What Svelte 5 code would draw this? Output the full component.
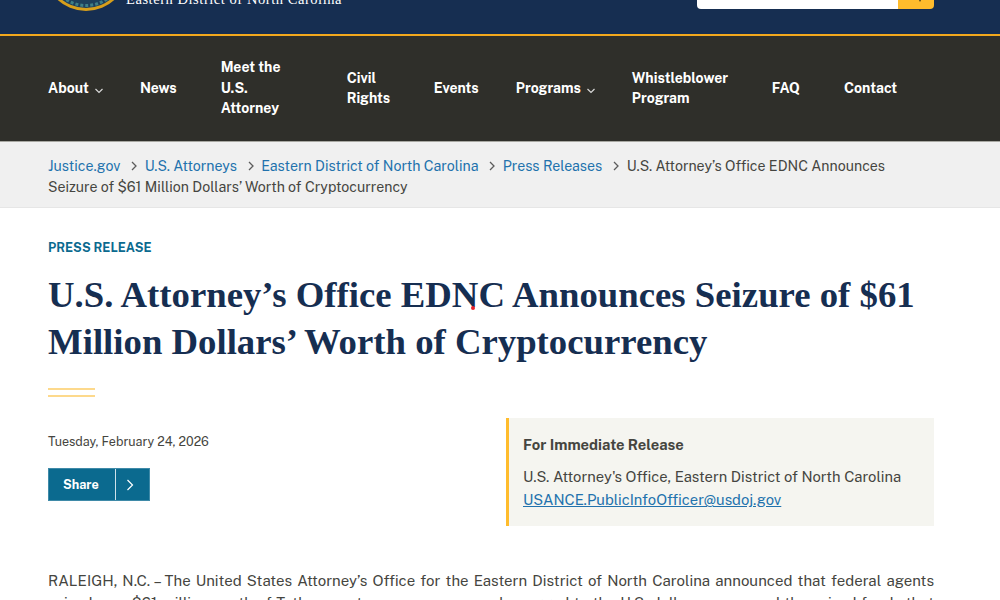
<script>
  const nav = [
    { label: "About", caret: true },
    { label: "News" },
    { label: "Meet the U.S. Attorney", size: "w82" },
    { label: "Civil Rights", size: "w43" },
    { label: "Events" },
    { label: "Programs", caret: true },
    { label: "Whistleblower Program", size: "w96" },
    { label: "FAQ" },
    { label: "Contact" }
  ];
  const crumbs = ["Justice.gov", "U.S. Attorneys", "Eastern District of North Carolina", "Press Releases"];
</script>

<header class="top">
  <div class="brand">
    <svg class="seal" width="84" height="84" viewBox="0 0 84 84">
      <circle cx="42" cy="42" r="42" fill="#d79f1b" />
      <circle cx="42" cy="42" r="39" fill="#1d3f5c" />
      <circle cx="42" cy="42" r="36.5" fill="none" stroke="#3f7f86" stroke-width="3" stroke-dasharray="3 2" />
      <circle cx="42" cy="42" r="31" fill="#8c8f4e" />
    </svg>
    <span class="district">Eastern District of North Carolina</span>
  </div>
  <div class="search">
    <div class="field"></div>
    <div class="go">
      <svg width="4" height="3" viewBox="0 0 4 3"><path d="M1 0h2l-1 2z" fill="#4a3b14" /></svg>
    </div>
  </div>
</header>

<nav class="mainnav">
  {#each nav as item}
    <a href="#top" class="navitem {item.size ?? ''}" class:has-caret={item.caret}>
      <span>{item.label}</span>
      {#if item.caret}
        <svg width="10" height="6" viewBox="0 0 10 6" fill="none" stroke="#d8d8d8" stroke-width="1.2"><path d="M1.5 1l3.5 3.5L8.5 1" /></svg>
      {/if}
    </a>
  {/each}
</nav>

<div class="crumbs">
  <p>
    {#each crumbs as c}
      <a href="#top">{c}</a>
      <svg class="sep" width="8" height="10" viewBox="0 0 8 10" fill="none" stroke="#5c5c5c" stroke-width="1.3"><path d="M2 1l4 4-4 4" /></svg>
    {/each}
    <span class="here">U.S. Attorney’s Office EDNC Announces Seizure of $61 Million Dollars’ Worth of Cryptocurrency</span>
  </p>
</div>

<main>
  <div class="kicker">PRESS RELEASE</div>
  <h1>U.S. Attorney’s Office EDNC Announces Seizure of $61 Million Dollars’ Worth of Cryptocurrency</h1>
  <div class="rule"></div>

  <div class="meta">
    <div class="left">
      <div class="date">Tuesday, February 24, 2026</div>
      <button class="share">
        <span class="share-label">Share</span>
        <span class="share-icon">
          <svg width="8" height="12" viewBox="0 0 8 12" fill="none" stroke="#fff" stroke-width="1.2"><path d="M1.5 1l5 5-5 5" /></svg>
        </span>
      </button>
    </div>
    <aside class="contact">
      <h2>For Immediate Release</h2>
      <div>U.S. Attorney's Office, Eastern District of North Carolina</div>
      <a href="#top">USANCE.PublicInfoOfficer@usdoj.gov</a>
    </aside>
  </div>

  <p class="body">RALEIGH, N.C. – The United States Attorney’s Office for the Eastern District of North Carolina announced that federal agents seized over $61 million worth of Tether cryptocurrency, commonly pegged to the U.S. dollar, a scam and the seized funds that were traced to victims across the country.</p>
</main>

<span class="dot"></span>

<style>
  :global(body) {
    margin: 0;
    background: #fff;
    font-family: "Public Sans", Inter, "Liberation Sans", sans-serif;
    overflow: hidden;
    height: 600px;
  }

  .top {
    height: 34px;
    background: #162e51;
    display: flex;
    justify-content: space-between;
    align-items: flex-start;
    padding: 0 66px 0 48px;
    overflow: hidden;
  }

  .brand {
    display: flex;
    align-items: flex-start;
    margin-left: -4.5px;
  }

  .seal {
    margin-top: -73px;
    flex: none;
  }

  .district {
    font-family: "Liberation Serif", serif;
    font-size: 14.5px;
    line-height: 16px;
    color: #fff;
    margin: -9px 0 0 -1.5px;
    letter-spacing: 0.55px;
    white-space: nowrap;
  }

  .search {
    display: flex;
    height: 9px;
    width: 237px;
    border-radius: 0 0 4px 4px;
    overflow: hidden;
  }

  .field {
    flex: 1;
    background: #fff;
  }

  .go {
    width: 36px;
    background: #ffbc2c;
    display: flex;
    justify-content: center;
    align-items: flex-start;
  }

  .go svg {
    display: block;
    margin-left: 8px;
  }

  .mainnav {
    height: 105px;
    background: #2f2f2a;
    border-top: 2px solid #f2a81d;
    display: flex;
    align-items: center;
    padding-left: 48px;
    gap: 44px;
    box-sizing: content-box;
  }

  .navitem {
    color: #fff;
    font-size: 14px;
    font-weight: 700;
    line-height: 20.5px;
    text-decoration: none;
    display: flex;
    align-items: center;
    gap: 5px;
    white-space: nowrap;
    flex: none;
    margin-top: -1px;
  }

  .navitem svg {
    margin-top: 6px;
  }

  .has-caret {
    margin-right: -8px;
  }

  .has-caret:not(:first-child) {
    margin-left: -7px;
  }

  .w82 {
    white-space: normal;
    width: 82px;
  }

  .w43 {
    white-space: normal;
    width: 43px;
  }

  .w96 {
    white-space: normal;
    width: 96px;
  }

  .crumbs {
    background: #f0f0f0;
    border-top: 1px solid #a8a8a2;
    border-bottom: 1px solid #e6e6e6;
    padding: 14px 48px 10px;
    height: 41px;
  }

  .crumbs p {
    margin: 0;
    width: 860px;
    font-size: 14.16px;
    line-height: 20.7px;
    color: #454540;
  }

  .crumbs a {
    color: #2272ad;
    text-decoration: none;
  }

  .sep {
    margin: 0 6.4px;
  }

  .here {
    margin-left: -3px;
  }

  main {
    padding: 32px 66px 0 48px;
  }

  .kicker {
    font-size: 12.64px;
    font-weight: 700;
    line-height: 16px;
    color: #0b6a8f;
  }

  h1 {
    font-family: "Liberation Serif", serif;
    font-weight: 700;
    font-size: 36.75px;
    line-height: 46.5px;
    color: #162e51;
    margin: 16px 0 0;
  }

  .rule {
    width: 47px;
    height: 5px;
    margin-top: 23px;
    border-top: 2px solid #fdd98c;
    border-bottom: 2px solid #fdd98c;
    box-sizing: content-box;
  }

  .meta {
    display: flex;
    justify-content: space-between;
    margin-top: 21px;
  }

  .date {
    font-size: 12.53px;
    line-height: 20px;
    color: #454540;
    margin-top: 14px;
  }

  .share {
    display: flex;
    align-items: stretch;
    height: 33px;
    width: 102px;
    margin-top: 16px;
    padding: 0;
    background: #0b6a8f;
    border: 1px solid #3f8aa8;
    color: #fff;
    font: inherit;
    font-size: 12.64px;
    font-weight: 700;
  }

  .share-label {
    width: 67px;
    box-sizing: border-box;
    padding-left: 14px;
    display: flex;
    align-items: center;
    border-right: 1px solid #cfe2ea;
  }

  .share-icon {
    flex: 1;
    display: flex;
    align-items: center;
    justify-content: center;
    padding-right: 5px;
  }

  .contact {
    width: 428px;
    height: 108px;
    box-sizing: border-box;
    background: #f5f5f0;
    border-left: 3px solid #ffbc2c;
    padding: 16px 14px;
    font-size: 14.75px;
    line-height: 23px;
    color: #454540;
  }

  .contact h2 {
    margin: 0 0 9px;
    font-size: 14.75px;
    line-height: 22px;
    font-weight: 700;
  }

  .contact a {
    color: #2272ad;
    display: block;
  }

  .body {
    margin: 44px 0 0;
    font-size: 15px;
    line-height: 22px;
    color: #454540;
    text-align: justify;
  }

  .dot {
    position: absolute;
    left: 471px;
    top: 306px;
    width: 4px;
    height: 4px;
    border-radius: 50%;
    background: #e8202a;
  }
</style>
